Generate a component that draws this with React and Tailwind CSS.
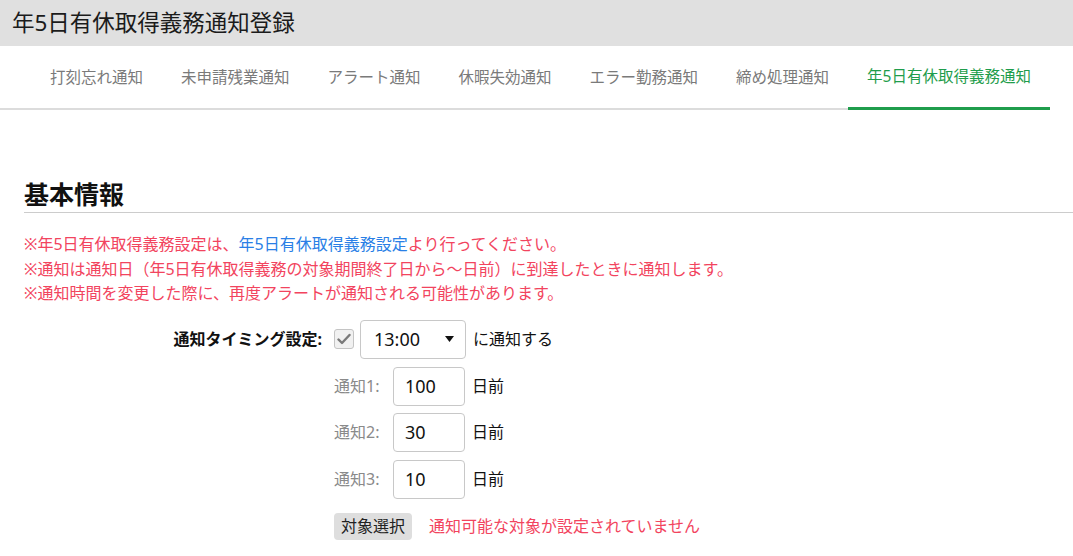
import React from "react";

const tabs = [
  "打刻忘れ通知",
  "未申請残業通知",
  "アラート通知",
  "休暇失効通知",
  "エラー勤務通知",
  "締め処理通知",
  "年5日有休取得義務通知",
];

const RED = "text-[#f2445e]";

function Checkbox() {
  return (
    <span className="flex h-[20px] w-[20px] items-center justify-center rounded-[3px] border border-[#c4c4c4] bg-[#f1f1f1]">
      <svg width="14" height="12" viewBox="0 0 14 12">
        <path d="M1.5 6.5 L5 10 L12.5 2" fill="none" stroke="#7a7a7a" strokeWidth="2.4" strokeLinecap="round" strokeLinejoin="round" />
      </svg>
    </span>
  );
}

function TimeSelect() {
  return (
    <div className="ml-[6px] flex h-[39px] w-[106px] items-center justify-between rounded-[4px] border border-[#c8c8c8] bg-white pl-[13px] pr-[11px] text-[18px] text-[#111]">
      <span>13:00</span>
      <svg width="9" height="6" viewBox="0 0 9 6">
        <path d="M0 0 H9 L4.5 6 Z" fill="#111" />
      </svg>
    </div>
  );
}

function DaysRow({ n, value, className }) {
  return (
    <div className={"flex items-center " + className}>
      <span className="w-[59px] shrink-0 text-[16px] text-[#8a8a8a]">通知{n}:</span>
      <div className="flex h-[39px] w-[72px] items-center rounded-[4px] border border-[#c8c8c8] bg-white pl-[11px] text-[18px] text-[#111]">
        {value}
      </div>
      <span className="ml-[7px] text-[16px] text-[#111]">日前</span>
    </div>
  );
}

export default function App() {
  return (
    <div
      className="min-h-[556px] w-full bg-white"
      style={{ fontFamily: '"Noto Sans", "Noto Sans CJK JP", sans-serif' }}
    >
      <header className="flex h-[46px] items-center bg-[#e0e0e0] pl-[12px] text-[22.5px] text-[#1b1b1b]">
        年5日有休取得義務通知登録
      </header>

      <nav className="flex h-[64px] w-fit border-b-2 border-[#dcdcdc] pl-[31px]">
        {tabs.map((t, i) => {
          const active = i === tabs.length - 1;
          return (
            <div
              key={t}
              className={
                "-mb-[2px] flex shrink-0 items-center whitespace-nowrap px-[19px] text-[15.5px] " +
                (active
                  ? "border-b-[3px] border-[#1f9d4c] pt-[1px] text-[#1f9d4c]"
                  : "text-[#7a7a7a]")
              }
            >
              {t}
            </div>
          );
        })}
      </nav>

      <main className="pl-[24px]">
        <h2 className="mt-[68px] border-b border-[#cccccc] pb-[1px] text-[25px] font-bold leading-[33px] text-[#111]">
          基本情報
        </h2>

        <div className={"mt-[19px] text-[16px] leading-[24.5px] " + RED}>
          <p>
            ※年5日有休取得義務設定は、
            <span className="text-[#2a7fe6]">年5日有休取得義務設定</span>
            より行ってください。
          </p>
          <p>※通知は通知日（年5日有休取得義務の対象期間終了日から～日前）に到達したときに通知します。</p>
          <p>※通知時間を変更した際に、再度アラートが通知される可能性があります。</p>
        </div>

        <div className="mt-[14px] grid grid-cols-[298px_1fr] gap-x-[12px]">
          <div className="flex h-[39px] items-center justify-end whitespace-nowrap text-[16px] font-bold text-[#111]">
            通知タイミング設定:
          </div>
          <div className="flex items-center">
            <Checkbox />
            <TimeSelect />
            <span className="ml-[7px] text-[16px] text-[#111]">に通知する</span>
          </div>

          <div />
          <div className="flex flex-col">
            <DaysRow n={1} value="100" className="mt-[8px]" />
            <DaysRow n={2} value="30" className="mt-[7px]" />
            <DaysRow n={3} value="10" className="mt-[8px]" />
            <div className="mt-[14px] flex items-center">
              <button className="h-[27px] rounded-[4px] bg-[#dedede] px-[7px] text-[16px] leading-[27px] text-[#222]">
                対象選択
              </button>
              <span className={"ml-[17px] text-[16px] " + RED}>
                通知可能な対象が設定されていません
              </span>
            </div>
          </div>
        </div>
      </main>
    </div>
  );
}
